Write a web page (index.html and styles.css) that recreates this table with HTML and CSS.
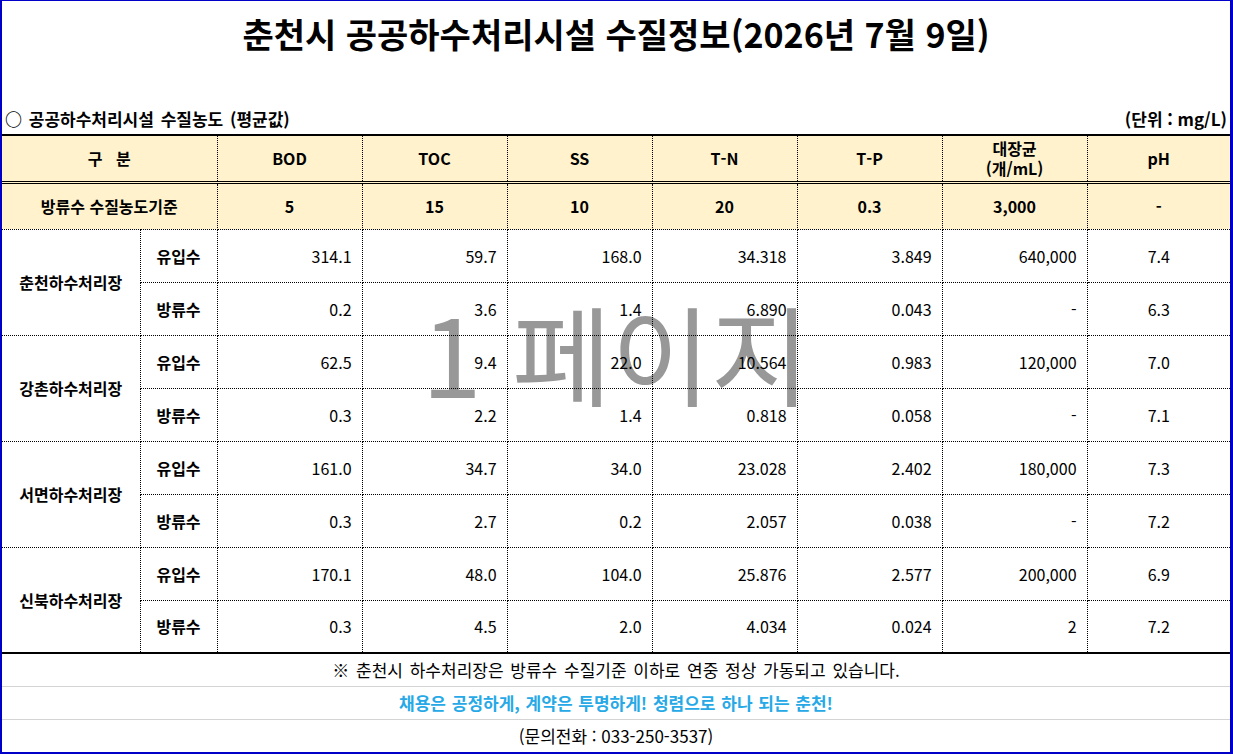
FILE: index.html
```html
<!DOCTYPE html>
<html lang="ko">
<head>
<meta charset="utf-8">
<title>춘천시 공공하수처리시설 수질정보</title>
<link rel="stylesheet" href="styles.css">
</head>
<body>
<div class="frame">
  <h1 class="title">춘천시 공공하수처리시설 수질정보(2026년 7월 9일)</h1>
  <div class="caption">
    <span class="caption-main">○ 공공하수처리시설 수질농도 (평균값)</span>
    <span class="caption-unit">(단위 : mg/L)</span>
  </div>
  <div class="table-wrap">
    <div class="watermark">1 페이지</div>
    <table class="quality">
      <colgroup>
        <col class="c-plant"><col class="c-kind">
        <col class="c-val"><col class="c-val"><col class="c-val"><col class="c-val"><col class="c-val"><col class="c-val"><col class="c-ph">
      </colgroup>
      <thead>
        <tr class="head">
          <th colspan="2">구&nbsp;&nbsp;&nbsp;분</th>
          <th>BOD</th><th>TOC</th><th>SS</th><th>T-N</th><th>T-P</th><th>대장균<br>(개/mL)</th><th>pH</th>
        </tr>
        <tr class="std">
          <th colspan="2">방류수 수질농도기준</th>
          <th>5</th><th>15</th><th>10</th><th>20</th><th>0.3</th><th>3,000</th><th>-</th>
        </tr>
      </thead>
      <tbody>
        <tr class="in">
          <th rowspan="2" class="plant">춘천하수처리장</th>
          <th class="kind">유입수</th>
          <td>314.1</td><td>59.7</td><td>168.0</td><td>34.318</td><td>3.849</td><td>640,000</td><td class="ph">7.4</td>
        </tr>
        <tr class="out">
          <th class="kind">방류수</th>
          <td>0.2</td><td>3.6</td><td>1.4</td><td>6.890</td><td>0.043</td><td>-</td><td class="ph">6.3</td>
        </tr>
        <tr class="in">
          <th rowspan="2" class="plant">강촌하수처리장</th>
          <th class="kind">유입수</th>
          <td>62.5</td><td>9.4</td><td>22.0</td><td>10.564</td><td>0.983</td><td>120,000</td><td class="ph">7.0</td>
        </tr>
        <tr class="out">
          <th class="kind">방류수</th>
          <td>0.3</td><td>2.2</td><td>1.4</td><td>0.818</td><td>0.058</td><td>-</td><td class="ph">7.1</td>
        </tr>
        <tr class="in">
          <th rowspan="2" class="plant">서면하수처리장</th>
          <th class="kind">유입수</th>
          <td>161.0</td><td>34.7</td><td>34.0</td><td>23.028</td><td>2.402</td><td>180,000</td><td class="ph">7.3</td>
        </tr>
        <tr class="out">
          <th class="kind">방류수</th>
          <td>0.3</td><td>2.7</td><td>0.2</td><td>2.057</td><td>0.038</td><td>-</td><td class="ph">7.2</td>
        </tr>
        <tr class="in">
          <th rowspan="2" class="plant">신북하수처리장</th>
          <th class="kind">유입수</th>
          <td>170.1</td><td>48.0</td><td>104.0</td><td>25.876</td><td>2.577</td><td>200,000</td><td class="ph">6.9</td>
        </tr>
        <tr class="out last">
          <th class="kind">방류수</th>
          <td>0.3</td><td>4.5</td><td>2.0</td><td>4.034</td><td>0.024</td><td>2</td><td class="ph">7.2</td>
        </tr>
      </tbody>
    </table>
  </div>
  <div class="notes">
    <p class="note">※ 춘천시 하수처리장은 방류수 수질기준 이하로 연중 정상 가동되고 있습니다.</p>
    <p class="note slogan">채용은 공정하게, 계약은 투명하게! 청렴으로 하나 되는 춘천!</p>
    <p class="note phone">(문의전화 : 033-250-3537)</p>
  </div>
</div>
</body>
</html>
```

FILE: styles.css
```css
* { box-sizing: border-box; }

html, body {
  margin: 0;
  padding: 0;
  background: #ffffff;
}

body {
  font-family: "Noto Sans CJK KR", "Noto Sans", sans-serif;
  color: #000000;
}

.frame {
  width: 1233px;
  height: 754px;
  border-style: solid;
  border-color: #0000c8;
  border-width: 1px 3px 2px 2px;
  display: flex;
  flex-direction: column;
  overflow: hidden;
}

.title {
  margin: 0;
  height: 103px;
  padding-top: 10px;
  font-size: 34px;
  font-weight: 700;
  line-height: 46px;
  text-align: center;
  letter-spacing: 0;
}

.caption {
  height: 31px;
  display: flex;
  justify-content: space-between;
  align-items: flex-end;
  padding: 0 3px 4px 3px;
  font-size: 17px;
  font-weight: 700;
  line-height: 22px;
}

.caption-main { word-spacing: 2px; }
.caption-unit { word-spacing: 0; }

.table-wrap {
  position: relative;
}

.watermark {
  position: absolute;
  left: 0;
  right: 0;
  top: 152px;
  text-align: center;
  font-size: 108px;
  line-height: 130px;
  color: #989898;
  font-weight: 400;
  pointer-events: none;
  z-index: 0;
}

.quality {
  position: relative;
  z-index: 1;
  width: 1228px;
  border-collapse: collapse;
  table-layout: fixed;
  font-size: 16px;
  line-height: 20px;
}

.c-plant { width: 138px; }
.c-kind { width: 77px; }
.c-val { width: 145px; }
.c-ph { width: 143px; }

.quality th,
.quality td {
  border: 1px dotted #000000;
  padding: 0;
  vertical-align: middle;
}

.quality th {
  font-weight: 700;
  text-align: center;
}

.quality tr > :first-child { border-left: none; }
.quality tr > :last-child { border-right: none; }

.head th {
  background: #fff2cc;
  height: 47px;
  border-top: 2px solid #000000;
  border-bottom: 3px double #000000;
}

.std th {
  background: #fff2cc;
  height: 47px;
  border-top: 3px double #000000;
}

.quality tbody tr { height: 53px; }

.quality td {
  text-align: right;
  padding-right: 10px;
  font-weight: 400;
}

.quality td.ph {
  text-align: center;
  padding-right: 0;
}

.quality .plant { border-left: none; }

.quality tr.last > *,
.quality tbody tr:nth-last-child(2) > .plant {
  border-bottom: 2px solid #000000;
}

.notes {
  display: flex;
  flex-direction: column;
  flex: 1;
}

.note {
  margin: 0;
  height: 33px;
  font-size: 17px;
  line-height: 32px;
  text-align: center;
  word-spacing: 2px;
  border-bottom: 1px solid #d4d4d4;
}

.note:last-child {
  border-bottom: none;
  flex: 1;
}

.phone {
  word-spacing: 0;
}

.slogan {
  color: #26a9e6;
  font-weight: 700;
  letter-spacing: 0;
  word-spacing: 1px;
}
```
